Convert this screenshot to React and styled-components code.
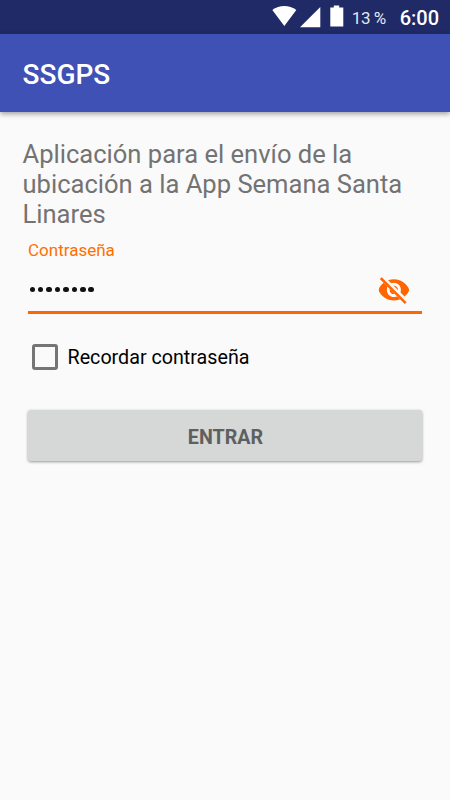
import React, { useState } from "react";
import styled, { createGlobalStyle } from "styled-components";

const GlobalStyle = createGlobalStyle`
  * {
    box-sizing: border-box;
  }

  body {
    margin: 0;
    background: #fafafa;
    font-family: Roboto, sans-serif;
  }
`;

const Screen = styled.div`
  min-height: 800px;
  background: #fafafa;
`;

const StatusBar = styled.div`
  display: flex;
  align-items: center;
  justify-content: flex-end;
  height: 34px;
  padding-right: 11px;
  background: #1f2a66;
  color: #fff;
`;

const StatusIcons = styled.svg`
  display: block;
  width: 74px;
  height: 34px;
  fill: #fff;
`;

const Battery = styled.span`
  width: 36px;
  margin-left: 6px;
  padding-top: 1px;
  font-size: 17px;
  letter-spacing: -0.1px;
  line-height: 34px;
  white-space: nowrap;
  word-spacing: -1px;
  color: #e4e6f0;
`;

const Clock = styled.span`
  margin-left: 12px;
  padding-top: 1px;
  font-size: 20px;
  font-weight: 500;
  line-height: 34px;
`;

const AppBar = styled.header`
  display: flex;
  align-items: center;
  height: 78px;
  padding: 2px 22.5px 0;
  background: #3f51b5;
  box-shadow: 0 2px 5px rgba(0, 0, 0, 0.36);
`;

const Title = styled.h1`
  margin: 0;
  color: #fff;
  font-size: 28px;
  font-weight: 500;
`;

const Content = styled.main`
  padding: 27px 22px 0;
`;

const Description = styled.p`
  margin: 0 -2px 0 0;
  padding-left: 0.5px;
  color: #737373;
  font-size: 25.55px;
  line-height: 30px;
`;

const Form = styled.form`
  padding: 11px 6px 0;
`;

const Label = styled.label`
  display: block;
  color: #ff6f00;
  font-size: 17px;
  line-height: 20px;
`;

const Field = styled.div`
  display: flex;
  align-items: center;
  height: 54px;
  padding: 8px 11px 0 0;
  border-bottom: 3px solid #ff6500;
`;

const Password = styled.div`
  display: flex;
  flex: 1;
  gap: 2.93px;
  padding-left: 1.5px;
`;

const Dot = styled.span`
  width: 5.5px;
  height: 5.5px;
  border-radius: 50%;
  background: #111;
`;

const EyeIcon = styled.svg`
  width: 33.75px;
  height: 33.75px;
`;

const CheckRow = styled.div`
  display: flex;
  align-items: center;
  margin-top: 30px;
  padding-left: 4px;
  cursor: pointer;
`;

const Box = styled.span`
  width: 26px;
  height: 26px;
  border: 3px solid ${(props) => (props.$checked ? "#ff6500" : "#757575")};
  border-radius: 3px;
`;

const CheckText = styled.span`
  height: 26px;
  margin-left: 9.5px;
  color: #000;
  font-size: 19.7px;
  line-height: 28px;
`;

const Button = styled.button`
  display: block;
  width: 100%;
  height: 51px;
  margin-top: 40px;
  padding: 3px 0 0 1px;
  border: 0;
  border-radius: 3px;
  background: #d6d7d7;
  box-shadow: 0 1px 3px rgba(0, 0, 0, 0.4);
  color: #5e605f;
  font-family: inherit;
  font-size: 19.7px;
  font-weight: 700;
`;

export default function App() {
  const [remember, setRemember] = useState(false);

  return (
    <Screen>
      <GlobalStyle />
      <StatusBar>
        <StatusIcons viewBox="0 0 74 34">
          <path d="M0.3 10C7.3 4.6 17.3 4.6 24.3 10L12.3 26Z" />
          <path d="M28 27.3L48.3 7V27.3Z" />
          <path d="M58.3 7.5H61.8V5.4H67.2V7.5H71.3V26.6H58.3Z" />
        </StatusIcons>
        <Battery>13 %</Battery>
        <Clock>6:00</Clock>
      </StatusBar>
      <AppBar>
        <Title>SSGPS</Title>
      </AppBar>
      <Content>
        <Description>
          Aplicación para el envío de la ubicación a la App Semana Santa Linares
        </Description>
        <Form>
          <Label>Contraseña</Label>
          <Field>
            <Password>
              {Array.from({ length: 8 }).map((_, index) => (
                <Dot key={index} />
              ))}
            </Password>
            <EyeIcon viewBox="0 0 24 24">
              <clipPath id="eyeMask">
                <path d="M2 4.27L19.73 22L22.27 19.46L4.54 1.73V1H23V23H1V4.27Z" />
              </clipPath>
              <path
                clipPath="url(#eyeMask)"
                fill="#ff6500"
                d="M12 4.5C7 4.5 2.73 7.61 1 12c1.73 4.39 6 7.5 11 7.5s9.27-3.11 11-7.5c-1.73-4.39-6-7.5-11-7.5zM12 17c-2.76 0-5-2.24-5-5s2.24-5 5-5 5 2.24 5 5-2.24 5-5 5zm0-8c-1.66 0-3 1.34-3 3s1.34 3 3 3 3-1.34 3-3-1.34-3-3-3z"
              />
              <path
                d="M3.27 4.27L19.74 20.74"
                stroke="#ff6500"
                strokeWidth="1.8"
                strokeLinecap="square"
              />
            </EyeIcon>
          </Field>
          <CheckRow onClick={() => setRemember(!remember)}>
            <Box $checked={remember} />
            <CheckText>Recordar contraseña</CheckText>
          </CheckRow>
          <Button type="button">ENTRAR</Button>
        </Form>
      </Content>
    </Screen>
  );
}
